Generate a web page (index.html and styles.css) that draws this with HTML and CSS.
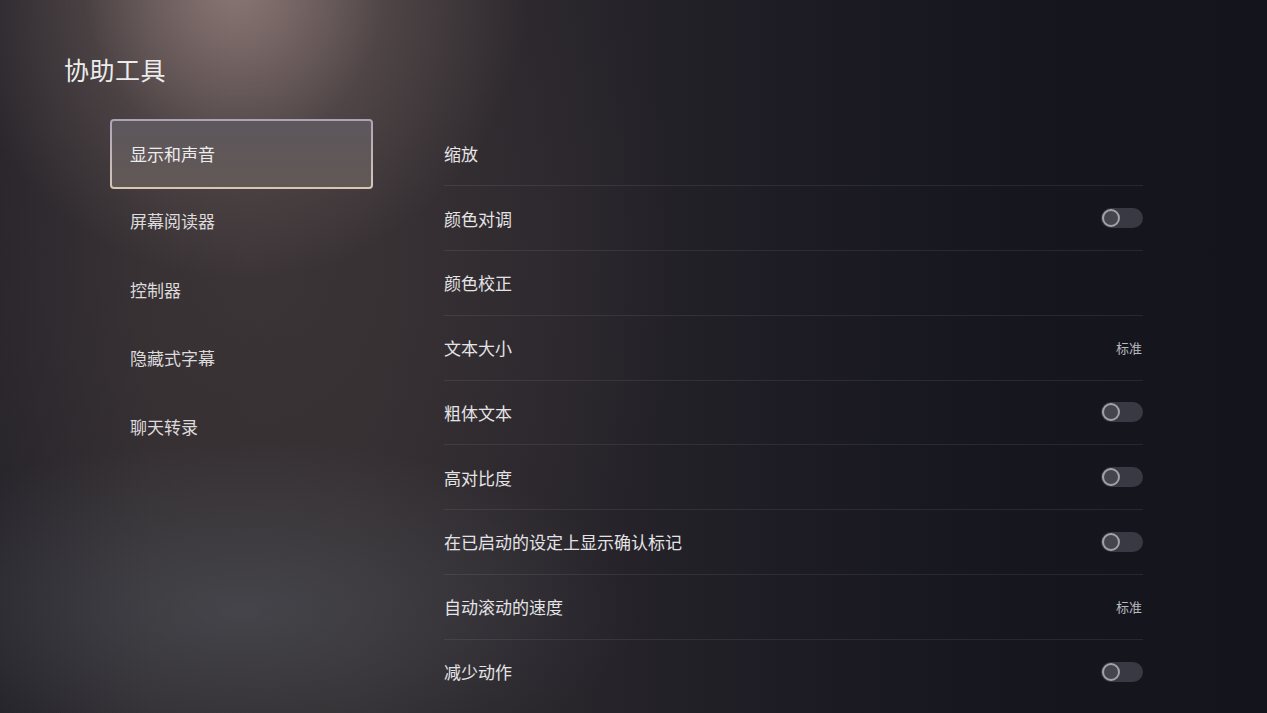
FILE: index.html
```html
<!DOCTYPE html>
<html lang="zh-CN">
<head>
<meta charset="utf-8">
<title>协助工具</title>
<link rel="stylesheet" href="styles.css">
</head>
<body>
<div class="screen">
  <h1 class="title">协助工具</h1>
  <div class="main">
    <nav class="nav">
      <div class="nav-item selected">显示和声音</div>
      <div class="nav-item">屏幕阅读器</div>
      <div class="nav-item">控制器</div>
      <div class="nav-item">隐藏式字幕</div>
      <div class="nav-item">聊天转录</div>
    </nav>
    <div class="list">
      <div class="row"><span class="label">缩放</span></div>
      <div class="row"><span class="label">颜色对调</span><span class="toggle"><span class="knob"></span></span></div>
      <div class="row"><span class="label">颜色校正</span></div>
      <div class="row"><span class="label">文本大小</span><span class="value">标准</span></div>
      <div class="row"><span class="label">粗体文本</span><span class="toggle"><span class="knob"></span></span></div>
      <div class="row"><span class="label">高对比度</span><span class="toggle"><span class="knob"></span></span></div>
      <div class="row"><span class="label">在已启动的设定上显示确认标记</span><span class="toggle"><span class="knob"></span></span></div>
      <div class="row"><span class="label">自动滚动的速度</span><span class="value">标准</span></div>
      <div class="row last"><span class="label">减少动作</span><span class="toggle"><span class="knob"></span></span></div>
    </div>
  </div>
</div>
</body>
</html>
```
FILE: styles.css
```css
html, body {
  margin: 0;
  padding: 0;
  width: 1267px;
  height: 713px;
  overflow: hidden;
  background: #15151e;
}

.screen {
  width: 1267px;
  height: 713px;
  overflow: hidden;
  box-sizing: border-box;
  padding: 54px 0 0 64px;
  font-family: "Noto Sans CJK SC", "Noto Sans", sans-serif;
  color: #e4e4e6;
  background:
    radial-gradient(ellipse 150px 160px at 235px -10px, rgba(175, 150, 145, 0.45), rgba(175, 150, 145, 0) 100%),
    radial-gradient(ellipse 290px 300px at 240px -20px, rgba(150, 128, 124, 0.55), rgba(150, 128, 124, 0) 100%),
    radial-gradient(ellipse 400px 170px at 240px 610px, rgba(92, 100, 108, 0.42), rgba(92, 100, 108, 0) 100%),
    radial-gradient(ellipse 430px 520px at 250px 260px, rgba(72, 62, 63, 0.5), rgba(72, 62, 63, 0) 100%),
    linear-gradient(to right, #232128 0%, #2e2a2e 12%, #302b2f 28%, #28252b 45%, #1d1c24 62%, #16161f 80%, #14141c 100%);
}

.title {
  margin: 0;
  font-size: 25px;
  line-height: 30px;
  font-weight: 400;
  color: #ececec;
  letter-spacing: 0.5px;
}

.main {
  display: flex;
  margin-top: 35px;
  padding-left: 46px;
}

.nav {
  width: 263px;
  display: flex;
  flex-direction: column;
}

.nav-item {
  height: 68.5px;
  box-sizing: border-box;
  display: flex;
  align-items: center;
  padding-left: 20px;
  padding-bottom: 2px;
  font-size: 17px;
  color: #dcdadb;
}

.nav-item.selected {
  height: 70px;
  margin-bottom: -1.5px;
  border: 2px solid transparent;
  border-radius: 4px;
  padding-left: 18px;
  background:
    linear-gradient(rgba(74, 67, 69, 0.8), rgba(68, 61, 62, 0.8)) padding-box,
    linear-gradient(to bottom, #a9a3b6, #d8c6b6) border-box;
  color: #ececec;
}

.list {
  width: 699px;
  margin-left: 71px;
  padding-top: 2.5px;
  display: flex;
  flex-direction: column;
}

.row {
  height: 64.75px;
  box-sizing: border-box;
  display: flex;
  align-items: center;
  justify-content: space-between;
  border-bottom: 1px solid rgba(255, 255, 255, 0.08);
}

.row.last {
  border-bottom: none;
}

.label {
  font-size: 17px;
  color: #e4e4e6;
}

.value {
  font-size: 13px;
  color: #b9b9bd;
  margin-right: 1px;
}

.toggle {
  width: 42px;
  height: 20px;
  border-radius: 10px;
  background: #393943;
  display: flex;
  align-items: center;
  padding-left: 1px;
  box-sizing: border-box;
}

.knob {
  width: 18px;
  height: 18px;
  box-sizing: border-box;
  border-radius: 50%;
  border: 2px solid #a2a2a8;
  background: #45454e;
}
```
